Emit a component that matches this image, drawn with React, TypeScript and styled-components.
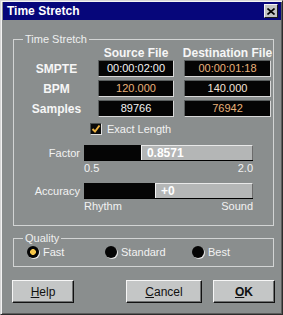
import React from 'react'
import styled, { createGlobalStyle } from 'styled-components'

const GlobalStyle = createGlobalStyle`
  html, body {
    margin: 0;
    padding: 0;
    background: #8a8e8e;
  }
  body {
    font-family: 'Liberation Sans', Arial, sans-serif;
  }
`

const FIELD_WHITE = '#f4f4f4'
const FIELD_ORANGE = '#e9b27a'

interface FieldRow {
  label: string
  source: string
  sourceColor: string
  dest: string
  destColor: string
}

const rows: FieldRow[] = [
  { label: 'SMPTE', source: '00:00:02:00', sourceColor: FIELD_WHITE, dest: '00:00:01:18', destColor: FIELD_ORANGE },
  { label: 'BPM', source: '120.000', sourceColor: FIELD_ORANGE, dest: '140.000', destColor: '#f3e2d6' },
  { label: 'Samples', source: '89766', sourceColor: FIELD_WHITE, dest: '76942', destColor: FIELD_ORANGE },
]

interface SliderSpec {
  label: string
  value: string
  position: number
  min: string
  max: string
}

const sliders: SliderSpec[] = [
  { label: 'Factor', value: '0.8571', position: 0.337, min: '0.5', max: '2.0' },
  { label: 'Accuracy', value: '+0', position: 0.42, min: 'Rhythm', max: 'Sound' },
]

const qualities = ['Fast', 'Standard', 'Best']

const App: React.FC = () => {
  return (
    <>
      <GlobalStyle />
      <Window>
        <TitleBar>
          <Title>Time Stretch</Title>
          <CloseButton>
            <svg width="8" height="7" viewBox="0 0 8 7">
              <path d="M0.5 0.5 L7.5 6.5 M7.5 0.5 L0.5 6.5" stroke="#000" strokeWidth="1.6" />
            </svg>
          </CloseButton>
        </TitleBar>
        <Body>
          <Group>
            <Legend>Time Stretch</Legend>
            <FieldGrid>
              <span />
              <Header>Source File</Header>
              <Header>Destination File</Header>
              {rows.map((row) => (
                <React.Fragment key={row.label}>
                  <RowLabel>{row.label}</RowLabel>
                  <ValueBox color={row.sourceColor}>{row.source}</ValueBox>
                  <ValueBox color={row.destColor}>{row.dest}</ValueBox>
                </React.Fragment>
              ))}
            </FieldGrid>
            <CheckRow>
              <CheckBox>
                <svg width="10" height="10" viewBox="0 0 10 10">
                  <path d="M1.5 5 L4 7.5 L8.5 1.5" stroke="#e9b040" strokeWidth="2" fill="none" />
                </svg>
              </CheckBox>
              <PlainText>Exact Length</PlainText>
            </CheckRow>
            {sliders.map((s) => (
              <SliderBlock key={s.label}>
                <SliderLabel>{s.label}</SliderLabel>
                <SliderTrack>
                  <SliderFill style={{ width: `${s.position * 100}%` }} />
                  <SliderThumb>{s.value}</SliderThumb>
                </SliderTrack>
                <span />
                <RangeLabels>
                  <span>{s.min}</span>
                  <span>{s.max}</span>
                </RangeLabels>
              </SliderBlock>
            ))}
          </Group>
          <QualityGroup>
            <Legend>Quality</Legend>
            <RadioRow>
              {qualities.map((q, i) => (
                <RadioOption key={q}>
                  <Radio checked={i === 0} />
                  <PlainText>{q}</PlainText>
                </RadioOption>
              ))}
            </RadioRow>
          </QualityGroup>
          <ButtonRow>
            <Button>
              <u>H</u>elp
            </Button>
            <ButtonPair>
              <Button wide>
                <u>C</u>ancel
              </Button>
              <Button bold>
                <u>O</u>K
              </Button>
            </ButtonPair>
          </ButtonRow>
        </Body>
      </Window>
    </>
  )
}

const Window = styled.div`
  box-sizing: border-box;
  width: 283px;
  height: 315px;
  padding: 1px 1px 0 2px;
  background: #8a8e8e;
  border: 1px solid;
  border-color: #d6d6d6 #2c2c2c #2c2c2c #d6d6d6;
  box-shadow: inset 1px 1px 0 #f4f4f4, inset -1px -1px 0 #5c5c5c;
  display: flex;
  flex-direction: column;
`

const TitleBar = styled.div`
  height: 18px;
  background: #06067a;
  display: flex;
  align-items: center;
  justify-content: space-between;
  padding: 0 3px 0 4px;
`

const Title = styled.span`
  color: #fff;
  font-weight: bold;
  font-size: 12px;
  line-height: 14px;
`

const CloseButton = styled.span`
  box-sizing: border-box;
  width: 14px;
  height: 14px;
  background: #c2c4c4;
  border: 1px solid;
  border-color: #f4f4f4 #1c1c1c #1c1c1c #f4f4f4;
  display: flex;
  align-items: center;
  justify-content: center;
`

const Body = styled.div`
  display: flex;
  flex-direction: column;
  padding: 0 6px 0 9px;
  color: #f2f2f2;
  font-size: 11px;
`

const Group = styled.fieldset`
  margin: 13px 1px 0 1px;
  padding: 0 0 12px 0;
  border: 1px solid #d2d4d4;
  min-width: 0;
`

const QualityGroup = styled(Group)`
  margin-top: 6px;
  padding-bottom: 7px;
`

const Legend = styled.legend`
  margin-left: 9px;
  padding: 0 2px;
  font-size: 11px;
  line-height: 13px;
  color: #eeeeee;
`

const FieldGrid = styled.div`
  display: grid;
  grid-template-columns: 74px 76px 87px;
  column-gap: 10px;
  row-gap: 3px;
`

const Header = styled.div`
  display: flex;
  justify-content: center;
  white-space: nowrap;
  font-weight: bold;
  font-size: 12px;
  line-height: 12px;
  color: #f6f6f6;
  margin-top: 1px;
  margin-bottom: -2px;
`

const RowLabel = styled.div`
  font-weight: bold;
  font-size: 12px;
  padding-left: 4px;
  margin-right: -7px;
  display: flex;
  align-items: center;
  justify-content: center;
  color: #f6f6f6;
`

const ValueBox = styled.div<{ color: string }>`
  box-sizing: border-box;
  height: 17px;
  background: #050505;
  color: ${(p) => p.color};
  border: 1px solid;
  border-color: #5a5e5e #d8d8d8 #d8d8d8 #5a5e5e;
  font-size: 11px;
  line-height: 15px;
  text-align: center;
`

const CheckRow = styled.div`
  display: flex;
  align-items: center;
  gap: 5px;
  margin: 6px 0 0 76px;
  height: 12px;
`

const CheckBox = styled.span`
  box-sizing: border-box;
  width: 12px;
  height: 12px;
  background: #0a0a0a;
  border: 1px solid;
  border-color: #4a4e4e #e0e0e0 #e0e0e0 #4a4e4e;
  display: flex;
  align-items: center;
  justify-content: center;
`

const PlainText = styled.span`
  font-size: 11px;
  line-height: 13px;
  color: #f2f2f2;
`

const SliderBlock = styled.div`
  display: grid;
  grid-template-columns: 67px 169px;
  column-gap: 3px;
  margin-top: 10px;

  & + & {
    margin-top: 8px;
  }
`

const SliderLabel = styled.div`
  text-align: right;
  align-self: center;
  font-size: 11px;
  line-height: 13px;
  padding-right: 1px;
`

const SliderTrack = styled.div`
  box-sizing: border-box;
  height: 16px;
  display: flex;
  border-bottom: 1px solid #000;
`

const SliderFill = styled.div`
  background: #050505;
  flex: none;
`

const SliderThumb = styled.div`
  flex: 1;
  box-sizing: border-box;
  background: #b4b6b6;
  border-top: 1px solid #e8e8e8;
  border-left: 1px solid #f4f4f4;
  border-right: 1px solid #6c6c6c;
  color: #fff;
  font-weight: bold;
  font-size: 12px;
  line-height: 14px;
  padding-left: 5px;
`

const RangeLabels = styled.div`
  display: flex;
  justify-content: space-between;
  font-size: 11px;
  line-height: 13px;
  margin-top: 1px;
`

const RadioRow = styled.div`
  display: grid;
  grid-template-columns: 78px 87px auto;
  padding-left: 13px;
  height: 14px;
  align-items: center;
`

const RadioOption = styled.div`
  display: flex;
  align-items: center;
  gap: 4px;
`

const Radio = styled.span<{ checked?: boolean }>`
  box-sizing: border-box;
  width: 12px;
  height: 12px;
  border-radius: 50%;
  background: ${(p) =>
    p.checked ? 'radial-gradient(circle, #f6c648 0 2.6px, #050505 3.2px)' : '#050505'};
  box-shadow: 1px 1px 0 #e4e4e4;
`

const ButtonRow = styled.div`
  display: flex;
  justify-content: space-between;
  margin-top: 13px;
`

const ButtonPair = styled.div`
  display: flex;
  gap: 11px;
`

const Button = styled.button<{ wide?: boolean; bold?: boolean }>`
  box-sizing: border-box;
  width: ${(p) => (p.wide ? '76px' : '62px')};
  height: 23px;
  padding: 0;
  background: #c4c6c6;
  border: 1px solid;
  border-color: #f6f6f6 #111 #111 #f6f6f6;
  box-shadow: inset -1px -1px 0 #6e7070;
  font-family: 'Liberation Sans', Arial, sans-serif;
  font-size: 12px;
  font-weight: ${(p) => (p.bold ? 'bold' : 'normal')};
  color: #111;
`

export default App
